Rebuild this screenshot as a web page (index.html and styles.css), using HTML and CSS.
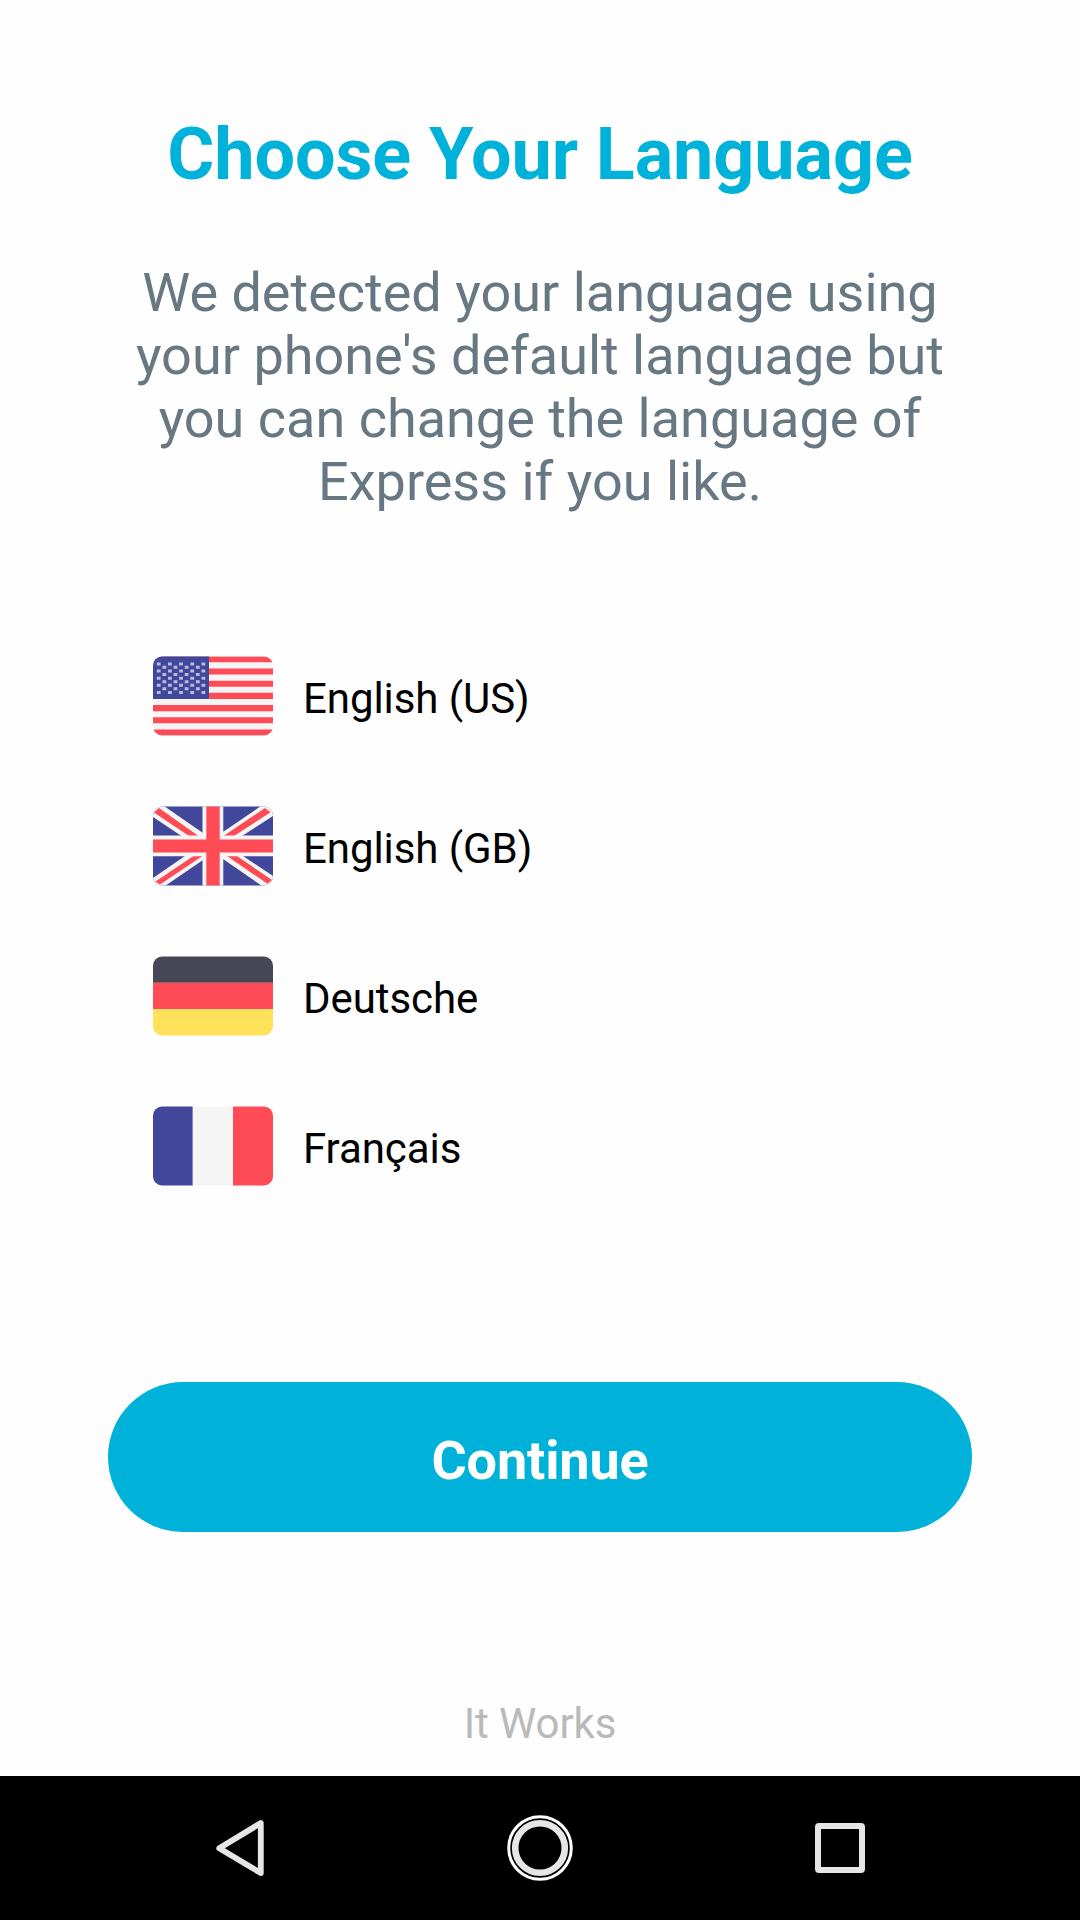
FILE: index.html
```html
<!DOCTYPE html>
<html lang="en">
<head>
<meta charset="utf-8">
<title>Choose Your Language</title>
<link rel="stylesheet" href="styles.css">
</head>
<body>
<main class="screen">
  <h1 class="title">Choose Your Language</h1>
  <p class="intro">We detected your language using<br>your phone's default language but<br>you can change the language of<br>Express if you like.</p>
  <ul class="languages">
    <li class="language">
      <svg class="flag" viewBox="0 0 120 80">
        <defs>
          <clipPath id="corners"><rect y=".5" width="120" height="79" rx="9"/></clipPath>
        </defs>
        <g clip-path="url(#corners)">
          <rect width="120" height="80" fill="#f5f5f5"/>
          <path d="M0 3.3H120M0 15.5H120M0 27.7H120M0 39.9H120M0 52.1H120M0 64.3H120M0 76.6H120" stroke="#ff4b55" stroke-width="6.1"/>
          <path d="M0 0H56V41.5Q56 43 54.5 43H0Z" fill="#41479b"/>
          <path d="M3.8 8h3.8M15 8h3.8M26.1 8h3.8M37.3 8h3.8M48.5 8h3.8M3.8 15h3.8M15 15h3.8M26.1 15h3.8M37.3 15h3.8M48.5 15h3.8M3.8 22.2h3.8M15 22.2h3.8M26.1 22.2h3.8M37.3 22.2h3.8M48.5 22.2h3.8M3.8 29.3h3.8M15 29.3h3.8M26.1 29.3h3.8M37.3 29.3h3.8M48.5 29.3h3.8M3.8 36.5h3.8M15 36.5h3.8M26.1 36.5h3.8M37.3 36.5h3.8M48.5 36.5h3.8M9.4 11.3h3.8M20.6 11.3h3.8M31.7 11.3h3.8M42.9 11.3h3.8M9.4 18.5h3.8M20.6 18.5h3.8M31.7 18.5h3.8M42.9 18.5h3.8M9.4 25.7h3.8M20.6 25.7h3.8M31.7 25.7h3.8M42.9 25.7h3.8M9.4 32.8h3.8M20.6 32.8h3.8M31.7 32.8h3.8M42.9 32.8h3.8" stroke="#b9bbda" stroke-width="3"/>
        </g>
      </svg>
      <span>English (US)</span>
    </li>
    <li class="language">
      <svg class="flag" viewBox="0 0 120 80">
        <g clip-path="url(#corners)">
          <rect width="120" height="80" fill="#41479b"/>
          <path d="M0 0H11L50 27V30H28.5L0 11ZM120 0H108L70 26V30H89L120 10ZM0 80V72L32 50H50V54L12 80ZM120 80V70L90 50H70V53L109 80Z" fill="#f5f5f5"/>
          <path d="M1 6.5L6 2L45.5 30H36ZM112 2L117.5 6.2L81 30H70.5ZM40.5 50H49.5L7 78.5L2.5 75.5ZM74 50H84L119 74L114.5 77.8Z" fill="#ff4b55"/>
          <path d="M0 29.5H49.5V0H70.3V29.5H120V50.2H70.3V80H49.5V50.2H0Z" fill="#f5f5f5"/>
          <path d="M0 33.5H53.3V0H66.7V33.5H120V46.4H66.7V80H53.3V46.4H0Z" fill="#ff4b55"/>
        </g>
      </svg>
      <span>English (GB)</span>
    </li>
    <li class="language">
      <svg class="flag" viewBox="0 0 120 80">
        <g clip-path="url(#corners)">
          <rect width="120" height="26.8" fill="#464655"/>
          <rect y="26.8" width="120" height="26.4" fill="#ff4b55"/>
          <rect y="53.2" width="120" height="26.8" fill="#ffe15a"/>
        </g>
      </svg>
      <span>Deutsche</span>
    </li>
    <li class="language">
      <svg class="flag" viewBox="0 0 120 80">
        <g clip-path="url(#corners)">
          <rect x="39.6" width="40.4" height="80" fill="#f5f5f5"/>
          <rect width="39.6" height="80" fill="#41479b"/>
          <rect x="80" width="40" height="80" fill="#ff4b55"/>
        </g>
      </svg>
      <span>Français</span>
    </li>
  </ul>
  <button class="continue" type="button">Continue</button>
  <p class="status">It Works</p>
</main>
<nav class="navbar">
  <svg class="nav-icon" viewBox="0 0 100 100"><path d="M29.2 50.3L70.8 25.1V75.1Z" fill="none" stroke="#e6e6e6" stroke-width="5.8" stroke-linejoin="round"/></svg>
  <svg class="nav-icon" viewBox="0 0 100 100" fill="none"><circle cx="50" cy="50" r="31.3" stroke="#fff" stroke-width="3"/><circle cx="50" cy="50" r="24.8" stroke="#e6e6e6" stroke-width="6.6"/></svg>
  <svg class="nav-icon" viewBox="0 0 100 100"><path d="M29 25H71Q75 25 75 29V71Q75 75 71 75H29Q25 75 25 71V29Q25 25 29 25ZM31 31V69H69V31Z" fill="#e6e6e6" fill-rule="evenodd"/></svg>
</nav>
</body>
</html>
```

FILE: styles.css
```css
* {
  box-sizing: border-box;
  margin: 0;
  padding: 0;
}

body {
  width: 1080px;
  height: 1920px;
  display: flex;
  flex-direction: column;
  overflow: hidden;
  background: #fefefe;
  font-family: Roboto, sans-serif;
}

.screen {
  height: 1776px;
  padding: 113px 108px 0;
  display: flex;
  flex-direction: column;
}

.title {
  font-size: 72px;
  line-height: 84px;
  font-weight: 700;
  letter-spacing: -0.12px;
  text-align: center;
  color: #00b2d9;
}

.intro {
  margin-top: 64px;
  font-size: 54px;
  line-height: 63px;
  text-align: center;
  white-space: nowrap;
  color: #687882;
}

.languages {
  margin-top: 108px;
  padding-left: 45px;
  list-style: none;
}

.language {
  height: 150px;
  display: flex;
  align-items: center;
  gap: 30px;
  font-size: 42px;
  line-height: 50px;
  letter-spacing: -0.07px;
  color: #000;
}

.language span {
  padding-top: 6px;
}

.flag {
  width: 120px;
  height: 80px;
}

.continue {
  height: 150px;
  margin-top: 161px;
  padding-top: 7px;
  border: 0;
  border-radius: 75px;
  background: #00b2d9;
  color: #fff;
  font: 700 54px/64px Roboto, sans-serif;
  letter-spacing: -0.15px;
}

.status {
  margin-top: 167px;
  font-size: 42px;
  line-height: 50px;
  letter-spacing: -0.1px;
  text-align: center;
  color: #b9b9b9;
}

.navbar {
  height: 144px;
  padding: 0 190px;
  display: flex;
  align-items: center;
  justify-content: space-between;
  background: #000;
}

.nav-icon {
  width: 100px;
  height: 100px;
}
```
